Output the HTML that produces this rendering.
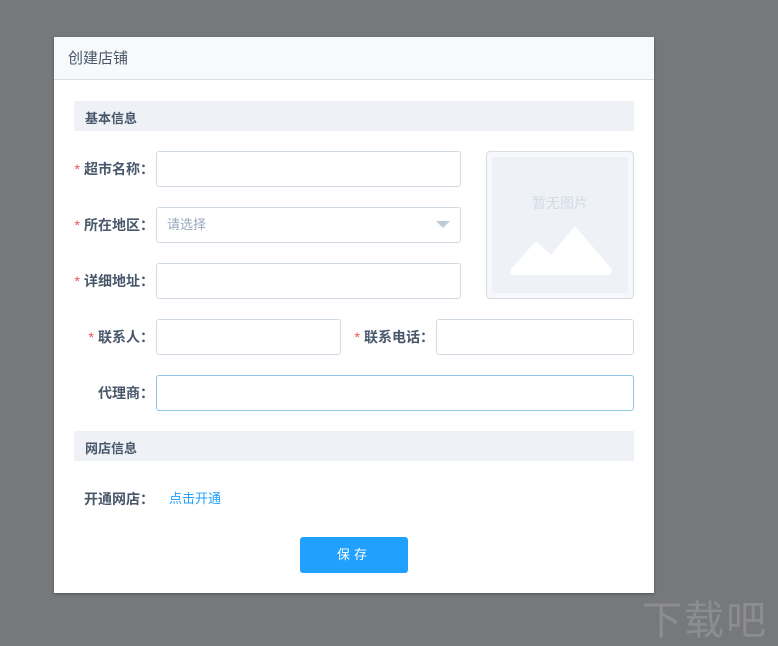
<!DOCTYPE html>
<html><head><meta charset="utf-8"><style>
*{margin:0;padding:0;box-sizing:border-box}
body{width:778px;height:646px;background:#77787a;position:relative;overflow:hidden;font-family:"Liberation Sans","Noto Sans CJK SC",sans-serif;font-size:14px;color:#48576a}
.dlg{position:absolute;left:54px;top:37px;width:600px;height:556px;background:#fff;box-shadow:0 1px 3px rgba(0,0,0,.3)}
.hd{height:43px;background:#f8f9fb;border-bottom:1px solid #d9dde3;padding:10px 14px;font-size:15px;color:#48576a}
.sec{position:absolute;left:20px;width:560px;height:30px;background:#eef1f6;font-weight:bold;font-size:13px;padding:7px 11px;color:#48576a}
.lbl{position:absolute;font-weight:bold;font-size:14px;color:#48576a;text-align:right;line-height:36px;white-space:nowrap}
.lbl b{color:#ff4949;font-weight:normal;margin-right:4px}
.lbl i{font-style:normal;display:inline-block;width:14px;text-align:right}
.in{position:absolute;height:36px;border:1px solid #d1dbe5;border-radius:3px;background:#fff}
.ph{color:#97a8be;font-size:13px;line-height:34px;padding-left:10px}
.pic{position:absolute;left:432px;top:114px;width:148px;height:148px;border:1px solid #d9dde3;border-radius:4px;background:#f6f8fb}
.pic .i{position:absolute;left:5px;top:5px;width:136px;height:136px;background:#eef1f6}
.btn{position:absolute;left:246px;top:500px;width:108px;height:36px;background:#20a0ff;border-radius:3px;color:#fff;font-size:13px;text-align:center;line-height:36px;letter-spacing:4px}
.wm{position:absolute;left:642px;top:588px;color:#8c8d8f;font-size:40px;font-weight:normal;letter-spacing:2px}
</style></head><body>
<div class="dlg">
<div class="hd">创建店铺</div>
<div class="sec" style="top:64px">基本信息</div>
<div class="lbl" style="left:10px;top:114px;width:90px"><b>*</b>超市名称<i>：</i></div>
<div class="in" style="left:102px;top:114px;width:305px"></div>
<div class="lbl" style="left:10px;top:170px;width:90px"><b>*</b>所在地区<i>：</i></div>
<div class="in" style="left:102px;top:170px;width:305px"><div class="ph">请选择</div>
<svg style="position:absolute;right:10px;top:13px" width="14" height="8"><path d="M0 0H14L7 7Z" fill="#bfcbd9"/></svg></div>
<div class="lbl" style="left:10px;top:226px;width:90px"><b>*</b>详细地址<i>：</i></div>
<div class="in" style="left:102px;top:226px;width:305px"></div>
<div class="lbl" style="left:10px;top:282px;width:90px"><b>*</b>联系人<i>：</i></div>
<div class="in" style="left:102px;top:282px;width:185px"></div>
<div class="lbl" style="left:280px;top:282px;width:100px"><b>*</b>联系电话<i>：</i></div>
<div class="in" style="left:382px;top:282px;width:198px"></div>
<div class="lbl" style="left:10px;top:338px;width:90px">代理商<i>：</i></div>
<div class="in" style="left:102px;top:338px;width:478px;border-color:#8cc5e6"></div>
<div class="pic"><div class="i">
<div style="position:absolute;top:36px;width:100%;text-align:center;color:#d3dae4;font-size:14px">暂无图片</div>
<svg style="position:absolute;left:0;top:0" width="136" height="136"><path d="M21 113L44 87L59 101L83 72L118 113Q118 116 115 116H23Q19 116 21 113Z" fill="#fff" stroke="#fff" stroke-width="4" stroke-linejoin="round"/></svg>
</div></div>
<div class="sec" style="top:394px">网店信息</div>
<div class="lbl" style="left:10px;top:444px;width:90px">开通网店<i>：</i></div>
<div style="position:absolute;left:115px;top:444px;line-height:36px;font-size:13px;color:#20a0ff">点击开通</div>
<div class="btn">保存</div>
</div>
<div class="wm">下载吧</div>
</body></html>
